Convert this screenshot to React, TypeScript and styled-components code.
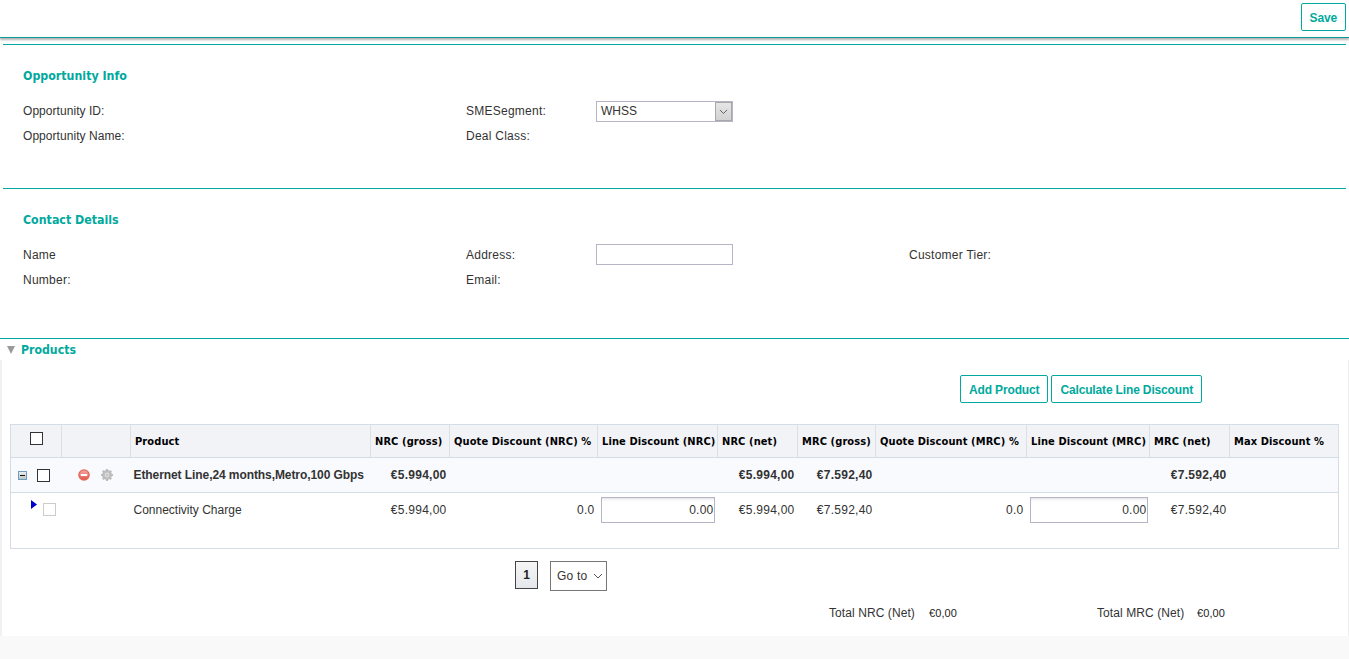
import React from "react";
import styled, { createGlobalStyle } from "styled-components";

const Global = createGlobalStyle`
  html, body { margin: 0; padding: 0; background: #fff; }
  body { font-family: "Liberation Sans", Arial, sans-serif; font-size: 12px; color: #333; }
  * { box-sizing: border-box; }
`;

const TEAL = "#00a99d";
const HEAD_FONT = `"DejaVu Sans Condensed", "DejaVu Sans", Tahoma, sans-serif`;

const Page = styled.div`
  width: 1349px;
  height: 659px;
  overflow: hidden;
  display: flex;
  flex-direction: column;
  background: #f9f9f9;
`;
const TopBar = styled.div`
  height: 38px;
  flex: none;
  background: #fff;
  border-bottom: 1px solid #0a9c92;
  box-shadow: 0 2px 2px rgba(0, 0, 0, 0.3);
  display: flex;
  justify-content: flex-end;
  align-items: flex-start;
  padding: 3px 3px 0 0;
  position: relative;
  z-index: 1;
`;
const ActionButton = styled.button`
  height: 28px;
  padding: 1px 8px 0;
  background: #fff;
  border: 1px solid ${TEAL};
  border-radius: 2px;
  color: ${TEAL};
  font: bold 12px "Liberation Sans", Arial, sans-serif;
  letter-spacing: -0.15px;
`;
const Content = styled.div`
  background: #fff;
  padding-top: 6px;
  flex: none;
`;
const Section = styled.section<{ $h: number }>`
  height: ${(p) => p.$h}px;
  margin: 0 3px;
  border-top: 1px solid ${TEAL};
  padding: 24px 0 0 20px;
`;
const SectionTitle = styled.h2`
  margin: 0;
  height: 15px;
  font: bold 12.3px/15px ${HEAD_FONT};
  font-stretch: condensed;
  color: ${TEAL};
`;
const FormGrid = styled.div`
  margin-top: 15px;
  display: grid;
  grid-template-columns: 443px 130px 313px 1fr;
  grid-auto-rows: 25px;
  align-items: center;
  color: #333;
`;
const Label = styled.div<{ $tight?: boolean }>`
  line-height: 21px;
  letter-spacing: ${(p) => (p.$tight ? "0.05px" : "0.25px")};
`;
const SelectBox = styled.div`
  width: 137px;
  height: 21px;
  border: 1px solid #b4b6c8;
  display: flex;
  justify-content: space-between;
  align-items: stretch;
  background: #fff;
  padding-left: 4px;
  line-height: 19px;
`;
const SelectArrow = styled.div`
  width: 17px;
  background: linear-gradient(#e6e6e6, #d2d2d2);
  border: 1px solid #a8a8a8;
  display: flex;
  align-items: center;
  justify-content: center;
`;
const PlainInput = styled.input`
  width: 137px;
  height: 21px;
  margin-bottom: 2px;
  border: 1px solid #b4b6c8;
  background: #fff;
  padding: 0 4px;
  outline: none;
`;
const ProductsHeader = styled.div`
  border-top: 1px solid ${TEAL};
  background: #fff;
  height: 22px;
  display: flex;
  align-items: center;
  gap: 6px;
  padding-left: 7px;
  flex: none;
`;
const ProductsTitle = styled.span`
  font: bold 12.2px ${HEAD_FONT};
  font-stretch: condensed;
  color: ${TEAL};
`;
const Panel = styled.div`
  height: 276px;
  flex: none;
  background: #fff;
  border-left: 2px solid #f1f1f1;
  border-right: 1px solid #eee;
  padding: 15px 0 0 8px;
`;
const ButtonRow = styled.div`
  display: flex;
  justify-content: flex-end;
  gap: 3px;
  padding-right: 146px;
  height: 28px;
`;
const Table = styled.table`
  margin-top: 21px;
  width: 1328px;
  table-layout: fixed;
  border-collapse: collapse;
  border: 1px solid #d4dde6;
`;
const HeadCell = styled.th`
  height: 33px;
  background: #f1f3f7;
  border-right: 1px solid #d9e0e6;
  border-bottom: 1px solid #d4dde6;
  padding: 0 0 0 4px;
  text-align: left;
  font: bold 11px ${HEAD_FONT};
  font-stretch: condensed;
  letter-spacing: 0.1px;
  color: #000;
  white-space: nowrap;
`;
const GroupRow = styled.tr`
  height: 35px;
  background: #f9fafe;
  border-bottom: 1px solid #d4dde6;
  font-weight: bold;
`;
const ChildRow = styled.tr`
  height: 56px;
`;
const Cell = styled.td<{ $right?: boolean; $tight?: boolean }>`
  padding: 0 3px;
  text-align: ${(p) => (p.$right ? "right" : "left")};
  white-space: nowrap;
  color: #333;
  letter-spacing: ${(p) => (p.$right ? "0.25px" : p.$tight ? "-0.08px" : "0")};
`;
const ChildCell = styled(Cell)`
  vertical-align: top;
  padding-top: 10px;
  line-height: 15px;
`;
const SelectCell = styled(ChildCell)`
  padding: 0;
`;
const InputCell = styled(Cell)`
  vertical-align: top;
  padding: 4px 0 0 3px;
`;
const AmountInput = styled.input<{ $w: number }>`
  display: block;
  width: ${(p) => p.$w}px;
  height: 26px;
  border: 1px solid #b4b6c8;
  box-shadow: inset 0 3px 3px -2px #ddd;
  padding: 0;
  text-align: right;
  font: 12px "Liberation Sans", Arial, sans-serif;
  letter-spacing: 0.25px;
  color: #333;
  outline: none;
  background: #fff;
`;
const Check = styled.span<{ $light?: boolean }>`
  display: block;
  width: 13px;
  height: 13px;
  flex: none;
  background: #fff;
  border: 1px solid ${(p) => (p.$light ? "#ccc" : "#333")};
  margin-top: ${(p) => (p.$light ? "3px" : "0")};
`;
const HeadCheckWrap = styled.div`
  padding: 0 0 6px 15px;
`;
const GroupSelect = styled.div`
  display: flex;
  align-items: center;
  gap: 10px;
  padding-left: 4px;
`;
const ChildSelect = styled.div`
  display: flex;
  align-items: flex-start;
  gap: 6px;
  padding: 7px 0 0 20px;
`;
const Icons = styled.div`
  display: flex;
  align-items: center;
  gap: 11px;
  padding-left: 13px;
`;
const Pager = styled.div`
  display: flex;
  align-items: flex-start;
  gap: 12px;
  margin-top: 12px;
  padding-left: 505px;
`;
const PageNum = styled.div`
  width: 23px;
  height: 28px;
  border: 1px solid #444;
  background: linear-gradient(#f5f5f5, #e4e7ea);
  display: flex;
  align-items: center;
  justify-content: center;
  font-weight: bold;
  color: #222;
`;
const GoTo = styled.div`
  width: 57px;
  height: 30px;
  border: 1px solid #777;
  display: flex;
  align-items: center;
  justify-content: space-between;
  padding: 0 3px 0 6px;
  color: #333;
  letter-spacing: 0.2px;
`;
const Totals = styled.div`
  display: grid;
  grid-template-columns: 100px 168px 100px 1fr;
  margin-top: 14px;
  padding-left: 819px;
  line-height: 16px;
  align-items: center;
  letter-spacing: 0.08px;
`;
const TotalValue = styled.span`
  font: 11px "Liberation Sans", Arial, sans-serif;
  color: #222;
`;

const Chevron = ({ size = 9, color = "#555" }: { size?: number; color?: string }) => (
  <svg width={size} height={size * 0.6} viewBox="0 0 10 6">
    <path d="M1 1l4 4 4-4" fill="none" stroke={color} strokeWidth="1" />
  </svg>
);

const Remove = () => (
  <svg width="12" height="12" viewBox="0 0 12 12">
    <defs>
      <linearGradient id="rm" x1="0" y1="0" x2="0" y2="1">
        <stop offset="0" stopColor="#f3a79f" />
        <stop offset="1" stopColor="#e4584c" />
      </linearGradient>
    </defs>
    <circle cx="6" cy="6" r="5.8" fill="#e2685c" />
    <circle cx="6" cy="6" r="4.6" fill="url(#rm)" />
    <rect x="2.8" y="5" width="6.4" height="2" fill="#fff" />
  </svg>
);

const Gear = () => (
  <svg width="12" height="12" viewBox="0 0 12 12">
    <g fill="#bdbdbd">
      <circle cx="6" cy="6" r="5" />
      {[0, 45, 90, 135].map((a) => (
        <rect key={a} x="5" y="0" width="2" height="12" transform={`rotate(${a} 6 6)`} />
      ))}
    </g>
    <circle cx="6" cy="6" r="2.4" fill="#dedede" />
    <circle cx="6" cy="6" r="1.2" fill="#c4c4c4" />
  </svg>
);

const Minus = () => (
  <svg width="9" height="9" viewBox="0 0 9 9">
    <defs>
      <linearGradient id="mn" x1="0" y1="0" x2="0" y2="1">
        <stop offset="0" stopColor="#f0f0f0" />
        <stop offset="1" stopColor="#b9c2c2" />
      </linearGradient>
    </defs>
    <rect x="0.5" y="0.5" width="8" height="8" fill="url(#mn)" stroke="#6f9dbd" />
    <rect x="2" y="4" width="5" height="1" fill="#111" />
  </svg>
);

const headers = [
  "",
  "",
  "Product",
  "NRC (gross)",
  "Quote Discount (NRC) %",
  "Line Discount (NRC)",
  "NRC (net)",
  "MRC (gross)",
  "Quote Discount (MRC) %",
  "Line Discount (MRC)",
  "MRC (net)",
  "Max Discount %",
];
const widths = [51, 69, 240, 79, 148, 120, 80, 78, 151, 123, 80, 109];

export default function App() {
  return (
    <Page>
      <Global />
      <TopBar>
        <ActionButton>Save</ActionButton>
      </TopBar>
      <Content>
        <Section $h={144}>
          <SectionTitle>Opportunity Info</SectionTitle>
          <FormGrid>
            <Label $tight>Opportunity ID:</Label>
            <Label>SMESegment:</Label>
            <SelectBox>
              WHSS
              <SelectArrow>
                <Chevron />
              </SelectArrow>
            </SelectBox>
            <div />
            <Label $tight>Opportunity Name:</Label>
            <Label>Deal Class:</Label>
          </FormGrid>
        </Section>
        <Section $h={150}>
          <SectionTitle>Contact Details</SectionTitle>
          <FormGrid>
            <Label>Name</Label>
            <Label>Address:</Label>
            <PlainInput />
            <Label>Customer Tier:</Label>
            <Label>Number:</Label>
            <Label>Email:</Label>
          </FormGrid>
        </Section>
      </Content>
      <ProductsHeader>
        <svg width="8" height="8" viewBox="0 0 8 8">
          <path d="M0 0h8L4 8z" fill="#9a9a9a" />
        </svg>
        <ProductsTitle>Products</ProductsTitle>
      </ProductsHeader>
      <Panel>
        <ButtonRow>
          <ActionButton>Add Product</ActionButton>
          <ActionButton>Calculate Line Discount</ActionButton>
        </ButtonRow>
        <Table>
          <colgroup>
            {widths.map((w, i) => (
              <col key={i} style={{ width: w }} />
            ))}
          </colgroup>
          <thead>
            <tr>
              {headers.map((h, i) => (
                <HeadCell key={i}>
                  {i === 0 ? (
                    <HeadCheckWrap>
                      <Check />
                    </HeadCheckWrap>
                  ) : (
                    h
                  )}
                </HeadCell>
              ))}
            </tr>
          </thead>
          <tbody>
            <GroupRow>
              <Cell>
                <GroupSelect>
                  <Minus />
                  <Check />
                </GroupSelect>
              </Cell>
              <Cell>
                <Icons>
                  <Remove />
                  <Gear />
                </Icons>
              </Cell>
              <Cell $tight>Ethernet Line,24 months,Metro,100 Gbps</Cell>
              <Cell $right>€5.994,00</Cell>
              <Cell />
              <Cell />
              <Cell $right>€5.994,00</Cell>
              <Cell $right>€7.592,40</Cell>
              <Cell />
              <Cell />
              <Cell $right>€7.592,40</Cell>
              <Cell />
            </GroupRow>
            <ChildRow>
              <SelectCell>
                <ChildSelect>
                  <svg width="6" height="9" viewBox="0 0 6 9">
                    <path d="M0 0l6 4.5L0 9z" fill="#0000cc" />
                  </svg>
                  <Check $light />
                </ChildSelect>
              </SelectCell>
              <ChildCell />
              <ChildCell>Connectivity Charge</ChildCell>
              <ChildCell $right>€5.994,00</ChildCell>
              <ChildCell $right>0.0</ChildCell>
              <InputCell>
                <AmountInput $w={114} defaultValue="0.00" />
              </InputCell>
              <ChildCell $right>€5.994,00</ChildCell>
              <ChildCell $right>€7.592,40</ChildCell>
              <ChildCell $right>0.0</ChildCell>
              <InputCell>
                <AmountInput $w={118} defaultValue="0.00" />
              </InputCell>
              <ChildCell $right>€7.592,40</ChildCell>
              <ChildCell />
            </ChildRow>
          </tbody>
        </Table>
        <Pager>
          <PageNum>1</PageNum>
          <GoTo>
            Go to
            <Chevron size={10} color="#555" />
          </GoTo>
        </Pager>
        <Totals>
          <span>Total NRC (Net)</span>
          <TotalValue>€0,00</TotalValue>
          <span>Total MRC (Net)</span>
          <TotalValue>€0,00</TotalValue>
        </Totals>
      </Panel>
    </Page>
  );
}
